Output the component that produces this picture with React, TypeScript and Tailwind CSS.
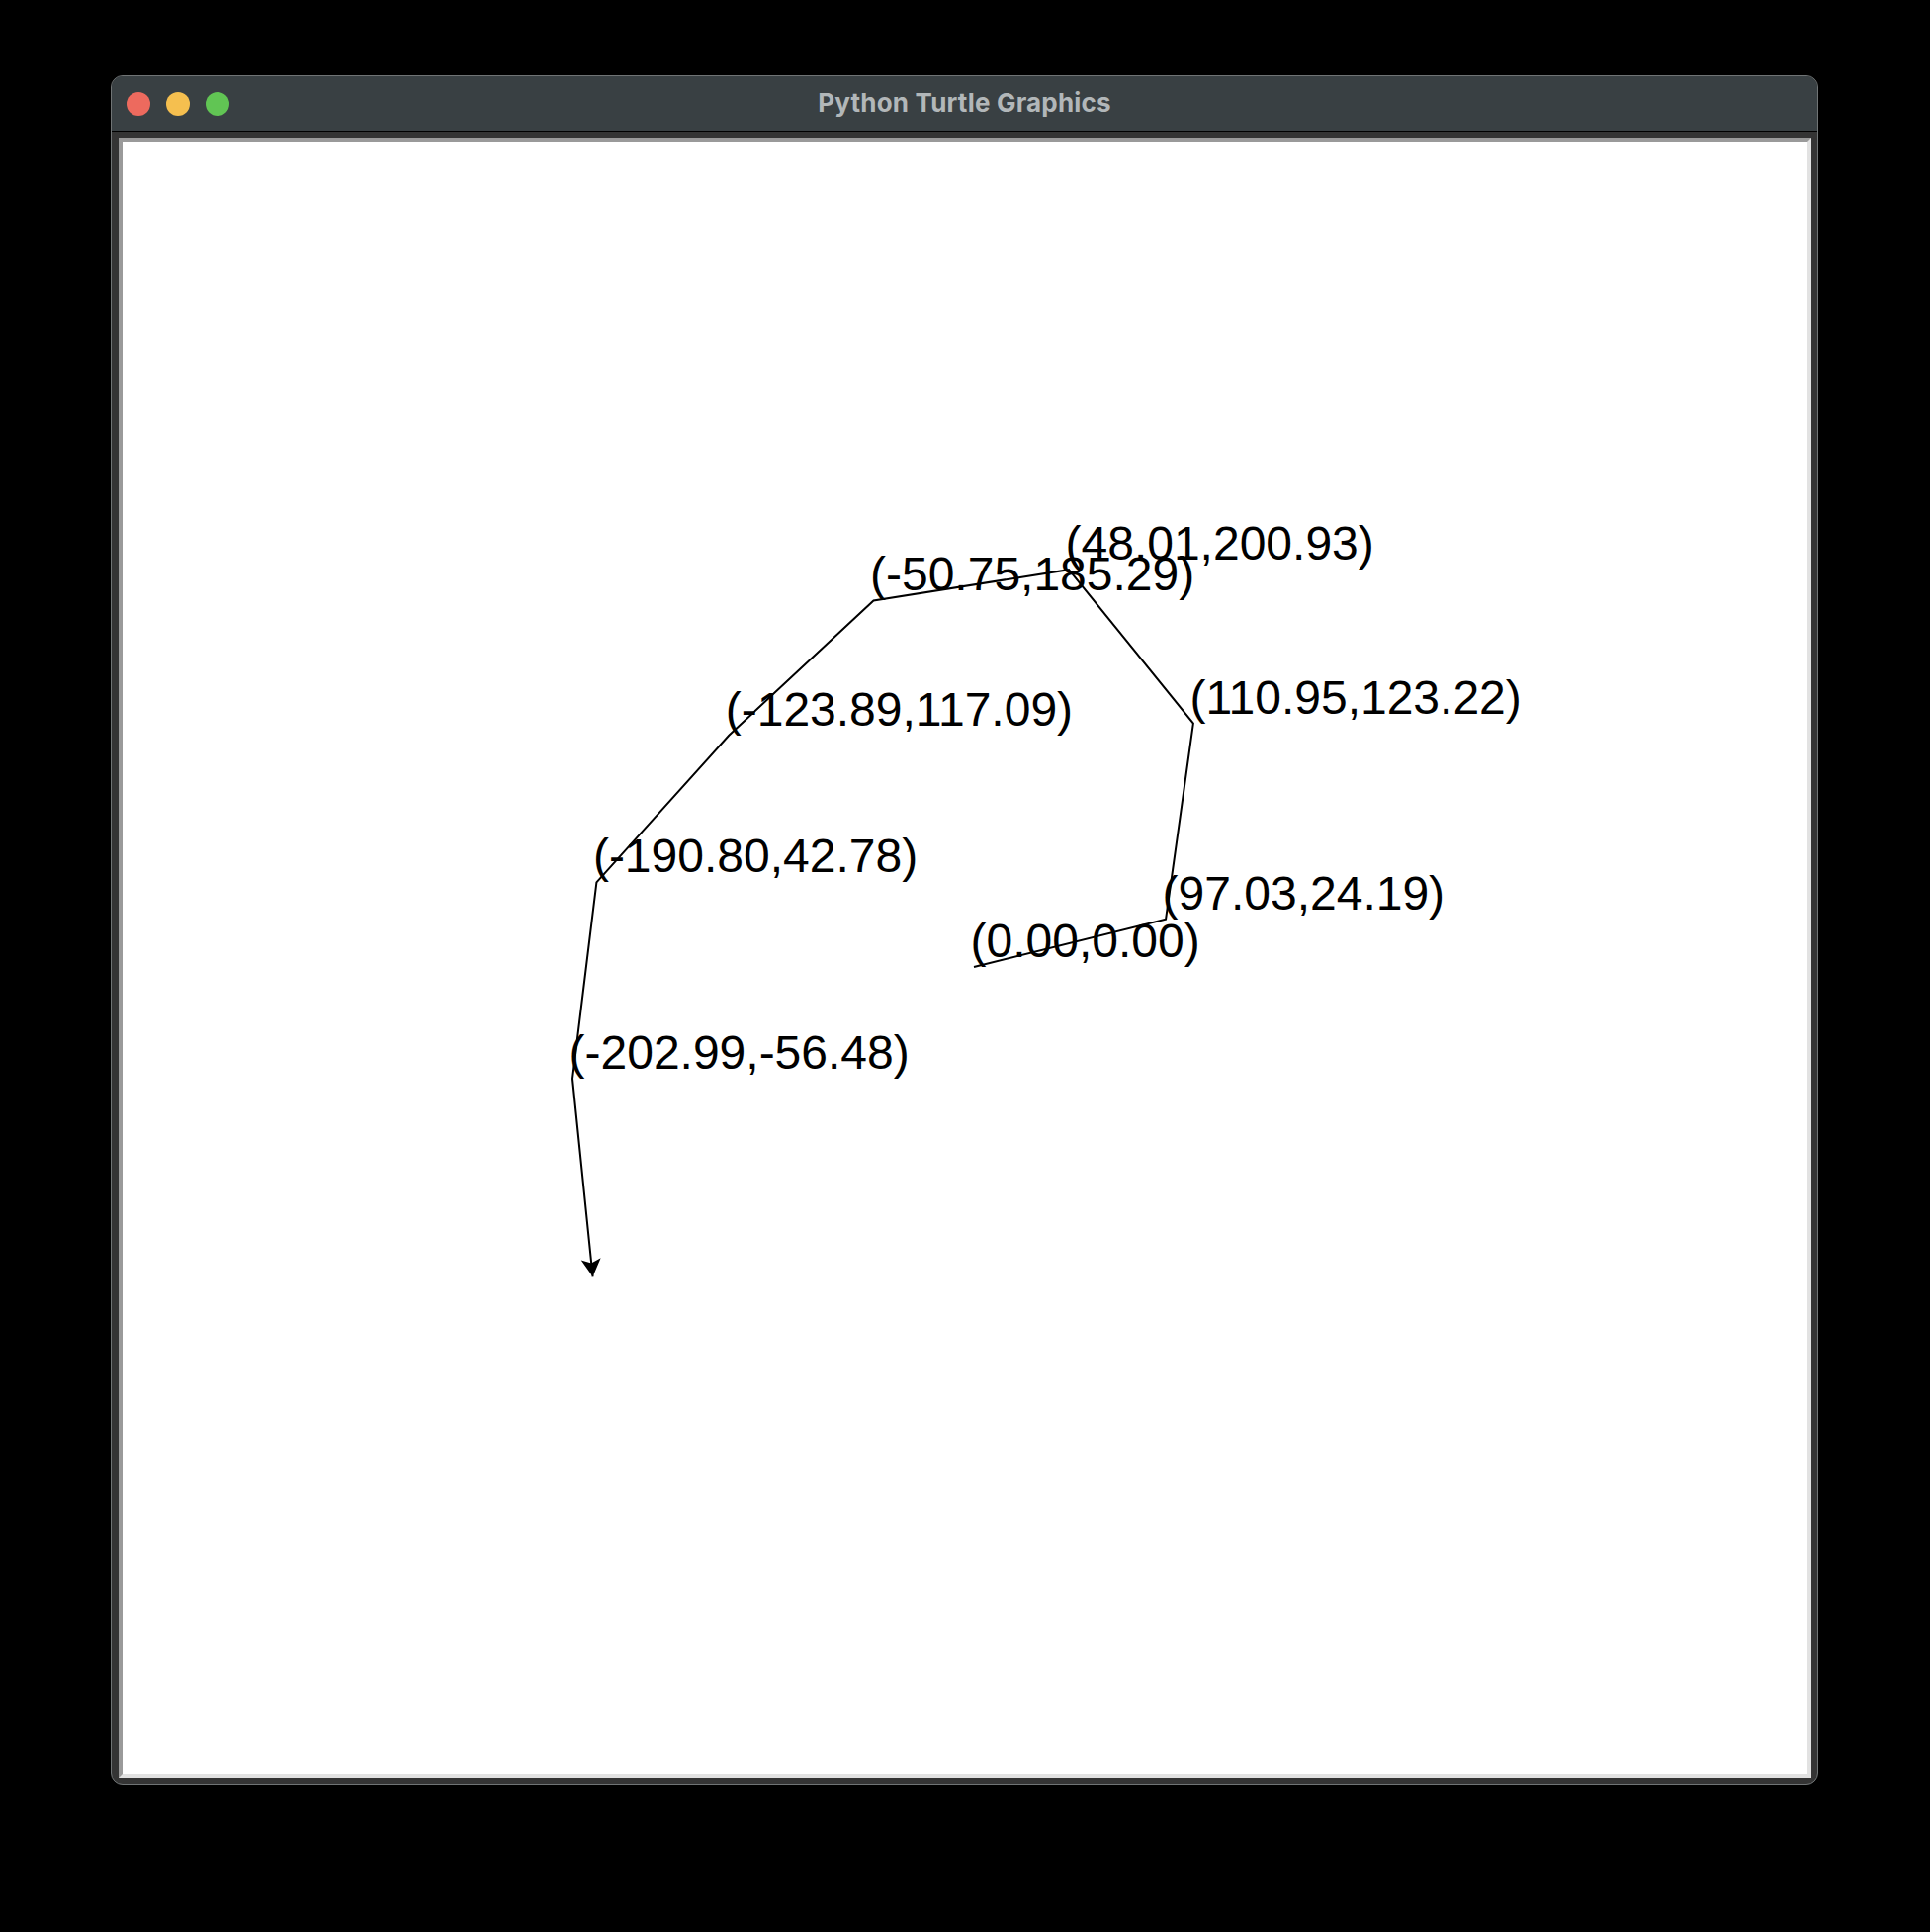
import React from "react";

const pts: [number, number][] = [
  [0, 0],
  [97.03, 24.19],
  [110.95, 123.22],
  [48.01, 200.93],
  [-50.75, 185.29],
  [-123.89, 117.09],
  [-190.8, 42.78],
  [-202.99, -56.48],
];

const fmt = (v: number) => v.toFixed(2);
const sx = (x: number) => 861 + 2 * x;
const sy = (y: number) => 834 - 2 * y;

export default function App() {
  const tip: [number, number] = [475.6, 1147.3];
  const path =
    pts.map((p, i) => `${i === 0 ? "M" : "L"}${sx(p[0])},${sy(p[1])}`).join(" ") +
    ` L${tip[0]},${tip[1]}`;
  // arrow (classic turtle shape) pointing along heading
  const f = [0.105, 0.994];
  const pp = [0.994, -0.105];
  const T = tip;
  const lw = [T[0] - 18 * f[0] + 10 * pp[0], T[1] - 18 * f[1] + 10 * pp[1]];
  const notch = [T[0] - 14 * f[0], T[1] - 14 * f[1]];
  const rw = [T[0] - 18 * f[0] - 10 * pp[0], T[1] - 18 * f[1] - 10 * pp[1]];
  const arrow = `${T[0]},${T[1]} ${lw[0]},${lw[1]} ${notch[0]},${notch[1]} ${rw[0]},${rw[1]}`;

  return (
    <div className="w-[1952px] h-[1954px] bg-black pl-[112px] pt-[76px]">
      <div className="w-[1727px] h-[1729px] rounded-[12px] border border-[#707475] overflow-hidden flex flex-col bg-[#343434]">
        <div className="h-[56px] shrink-0 bg-[#394043] border-b border-black grid grid-cols-[1fr_auto_1fr] items-center">
          <div className="flex items-center gap-[16px] pl-[15px]">
            <div className="w-[24px] h-[24px] rounded-full bg-[#ed6a5e]" />
            <div className="w-[24px] h-[24px] rounded-full bg-[#f5bf4f]" />
            <div className="w-[24px] h-[24px] rounded-full bg-[#61c554]" />
          </div>
          <div
            className="text-[26px] font-bold text-[#b2b7b9] leading-none tracking-[0.2px] pb-[1px]"
            style={{ fontFamily: "Inter, 'Liberation Sans', sans-serif" }}
          >
            Python Turtle Graphics
          </div>
          <div />
        </div>
        <div className="flex-1 flex pl-[7px] pt-[7px] pr-[6px] pb-[6px]">
          <div className="flex-1 bg-white border-4 border-t-[#9a9a9a] border-l-[#9a9a9a] border-r-[#e2e2e2] border-b-[#e2e2e2] overflow-hidden">
            <svg width="1704" height="1650" viewBox="0 0 1704 1650" className="block">
              {pts.map((p, i) => (
                <text
                  key={i}
                  x={sx(p[0]) - 3.5}
                  y={sy(p[1]) - 10}
                  fontSize="48"
                  fill="#000"
                  style={{ fontFamily: "'Liberation Sans', Arial, sans-serif" }}
                >
                  {`(${fmt(p[0])},${fmt(p[1])})`}
                </text>
              ))}
              <path d={path} fill="none" stroke="#000" strokeWidth="2" strokeLinejoin="miter" />
              <polygon points={arrow} fill="#000" />
            </svg>
          </div>
        </div>
      </div>
    </div>
  );
}
